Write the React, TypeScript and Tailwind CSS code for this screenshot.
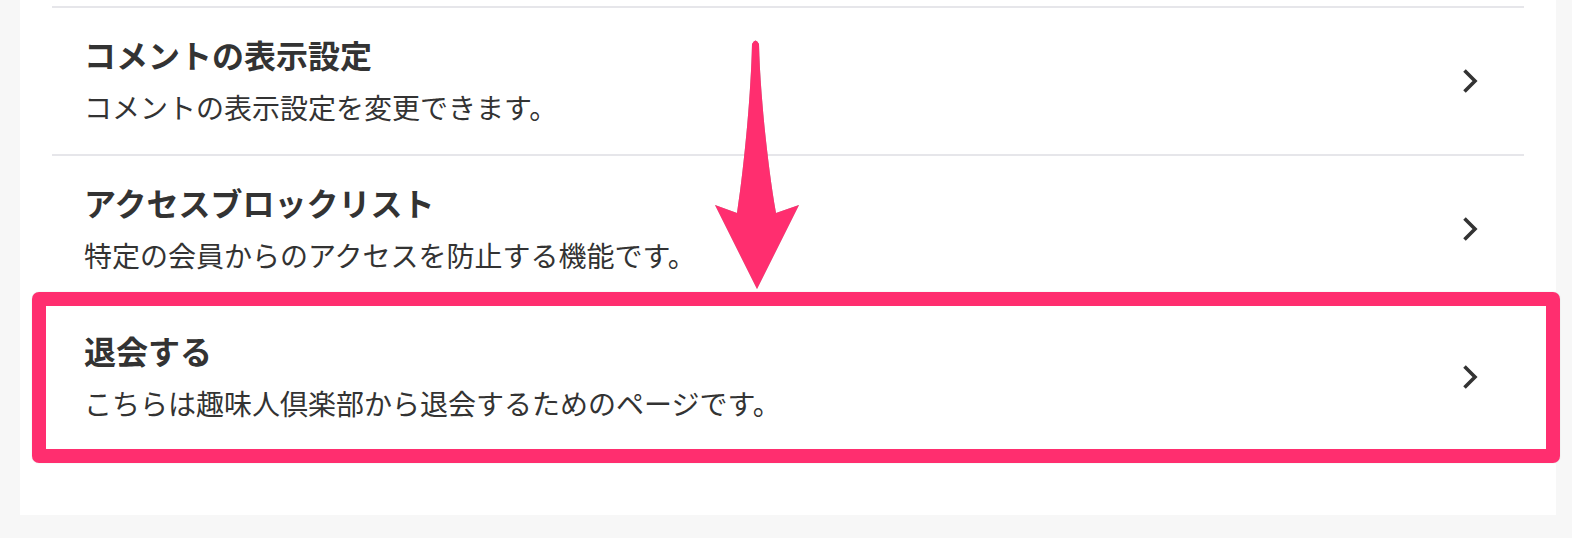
const ROWS = [
  { title: "コメントの表示設定", desc: "コメントの表示設定を変更できます。" },
  { title: "アクセスブロックリスト", desc: "特定の会員からのアクセスを防止する機能です。" },
  { title: "退会する", desc: "こちらは趣味人倶楽部から退会するためのページです。" },
];

const Chevron = () => (
  <svg width="16" height="26" viewBox="0 0 16 26" fill="none" className="shrink-0">
    <path d="M2.5 2.5 L13 13 L2.5 23.5" stroke="#333333" strokeWidth="3.6" strokeLinejoin="miter" />
  </svg>
);

const SettingRow = ({ title, desc }: { title: string; desc: string }) => (
  <div className="flex items-center border-t-2 border-[#e6e6ea] pl-[32px] pr-[46px]">
    <div className="flex-1 pt-[22px] pb-[27px]">
      <p className="text-[32px] font-bold leading-[48px] text-[#333333]">{title}</p>
      <p className="mt-[9px] text-[28px] leading-[40px] text-[#333333]">{desc}</p>
    </div>
    <Chevron />
  </div>
);

export default function App() {
  return (
    <div
      className="relative min-h-screen bg-[#f7f7f7]"
      style={{ fontFamily: '"Noto Sans CJK JP", "Noto Sans", sans-serif' }}
    >
      <div className="ml-[20px] w-[1536px] bg-white px-[32px] pt-[6px] pb-[65px]">
        {ROWS.map((r) => (
          <SettingRow key={r.title} title={r.title} desc={r.desc} />
        ))}
      </div>

      {/* 注釈: 強調枠 */}
      <div className="pointer-events-none absolute left-[32px] top-[292px] h-[171px] w-[1528px] rounded-[7px] border-[14px] border-[#ff2e6f] shadow-[0_0_1px_rgba(0,0,0,0.25)]" />

      {/* 注釈: 矢印 */}
      <svg
        className="pointer-events-none absolute left-[700px] top-[30px]"
        width="120"
        height="270"
        viewBox="700 30 120 270"
        style={{ filter: "drop-shadow(0 0 0.6px rgba(0,0,0,0.35))" }}
      >
        <path
          d="M752 44 Q755.5 37 759 44 C760 90 767 160 776 213 L799 205 L757 289 L715 205 L737 213 C745 160 751 90 752 44 Z"
          fill="#ff2e6f"
        />
      </svg>
    </div>
  );
}
